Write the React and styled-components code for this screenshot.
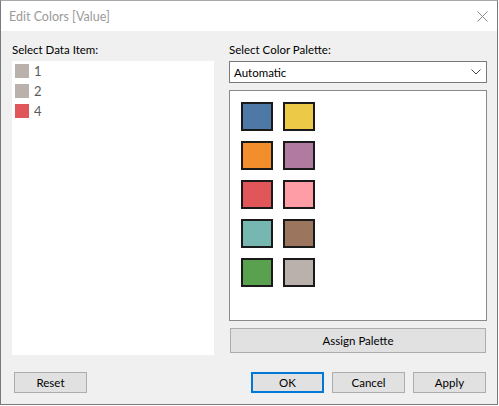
import React from "react";
import styled, { createGlobalStyle } from "styled-components";

const GlobalStyle = createGlobalStyle`
  html, body {
    margin: 0;
    padding: 0;
    background: #ffffff;
  }
  * {
    box-sizing: border-box;
  }
`;

const dataItems = [
  { label: "1", color: "#bab0ac" },
  { label: "2", color: "#bab0ac" },
  { label: "4", color: "#e15759" },
];

const palette = [
  "#4e79a7",
  "#edc948",
  "#f28e2b",
  "#b07aa1",
  "#e15759",
  "#ff9da7",
  "#76b7b2",
  "#9c755f",
  "#59a14f",
  "#bab0ac",
];

export default function App() {
  return (
    <>
      <GlobalStyle />
      <Window>
        <TitleBar>
          <Title>Edit Colors [Value]</Title>
          <CloseButton aria-label="Close">
            <svg width="11" height="11" viewBox="0 0 11 11">
              <path d="M0.5 0.5 L10.5 10.5 M10.5 0.5 L0.5 10.5" stroke="#8a8a8a" strokeWidth="1" />
            </svg>
          </CloseButton>
        </TitleBar>
        <Body>
          <Main>
            <LeftColumn>
              <Label>Select Data Item:</Label>
              <ItemList>
                {dataItems.map((item) => (
                  <ItemRow key={item.label}>
                    <ItemSwatch $color={item.color} />
                    <ItemText>{item.label}</ItemText>
                  </ItemRow>
                ))}
              </ItemList>
            </LeftColumn>
            <RightColumn>
              <Label>Select Color Palette:</Label>
              <Select>
                <span>Automatic</span>
                <svg width="10" height="6" viewBox="0 0 10 6">
                  <path d="M0.5 0.5 L5 5 L9.5 0.5" fill="none" stroke="#444" strokeWidth="1" />
                </svg>
              </Select>
              <PaletteBox>
                <SwatchGrid>
                  {palette.map((c, i) => (
                    <PaletteSwatch key={i} $color={c} />
                  ))}
                </SwatchGrid>
              </PaletteBox>
              <AssignButton>Assign Palette</AssignButton>
            </RightColumn>
          </Main>
          <Footer>
            <Button>Reset</Button>
            <FooterRight>
              <Button $primary>OK</Button>
              <Button>Cancel</Button>
              <Button>Apply</Button>
            </FooterRight>
          </Footer>
        </Body>
      </Window>
    </>
  );
}

const Window = styled.div`
  width: 498px;
  height: 405px;
  border: 1px solid #7a7a7a;
  border-top-color: #aaaaaa;
  background: #f0f0f0;
  display: flex;
  flex-direction: column;
  font-family: "Segoe UI", Lato, "Noto Sans", sans-serif;
  font-size: 11.5px;
  color: #000;
`;

const TitleBar = styled.div`
  height: 30px;
  background: #ffffff;
  display: flex;
  align-items: center;
  justify-content: space-between;
  padding: 0 9px 0 8px;
`;

const Title = styled.div`
  color: #9a9a9a;
  font-size: 12.5px;
`;

const CloseButton = styled.div`
  display: flex;
  align-items: center;
  width: 11px;
  height: 11px;
`;

const Body = styled.div`
  flex: 1;
  display: flex;
  flex-direction: column;
  padding: 8px 10px 11px 11px;
`;

const Main = styled.div`
  display: flex;
  gap: 15px;
  height: 316px;
`;

const LeftColumn = styled.div`
  width: 202px;
  display: flex;
  flex-direction: column;
`;

const RightColumn = styled.div`
  flex: 1;
  display: flex;
  flex-direction: column;
`;

const Label = styled.div`
  height: 22px;
  padding-top: 4px;
  line-height: 14px;
`;

const ItemList = styled.div`
  flex: 1;
  background: #ffffff;
  padding: 3px;
`;

const ItemRow = styled.div`
  display: flex;
  align-items: flex-start;
  gap: 5px;
  height: 20px;
`;

const ItemSwatch = styled.div`
  width: 14px;
  height: 14px;
  background: ${(p) => p.$color};
`;

const ItemText = styled.span`
  font-size: 13px;
  line-height: 15px;
  color: #5a5a5a;
`;

const Select = styled.div`
  height: 22px;
  background: #ffffff;
  border: 1px solid #7a7a7a;
  display: flex;
  align-items: center;
  justify-content: space-between;
  padding: 0 5px 0 4px;
`;

const PaletteBox = styled.div`
  flex: 1;
  margin-top: 7px;
  background: #ffffff;
  border: 1px solid #8a8a8a;
  padding: 11px;
`;

const SwatchGrid = styled.div`
  display: grid;
  grid-template-columns: repeat(2, 32px);
  grid-auto-rows: 29px;
  column-gap: 10px;
  row-gap: 10px;
`;

const PaletteSwatch = styled.div`
  background: ${(p) => p.$color};
  border: 2px solid #1a1a1a;
`;

const AssignButton = styled.div`
  margin: 7px 1px 2px;
  height: 25px;
  background: #e1e1e1;
  border: 1px solid #adadad;
  display: flex;
  align-items: center;
  justify-content: center;
`;

const Footer = styled.div`
  margin-top: auto;
  display: flex;
  justify-content: space-between;
  padding: 0 1px 0 2px;
`;

const FooterRight = styled.div`
  display: flex;
  gap: 8px;
`;

const Button = styled.div`
  width: 73px;
  height: 21px;
  background: #e1e1e1;
  border: ${(p) => (p.$primary ? "2px solid #0078d7" : "1px solid #adadad")};
  display: flex;
  align-items: center;
  justify-content: center;
`;
